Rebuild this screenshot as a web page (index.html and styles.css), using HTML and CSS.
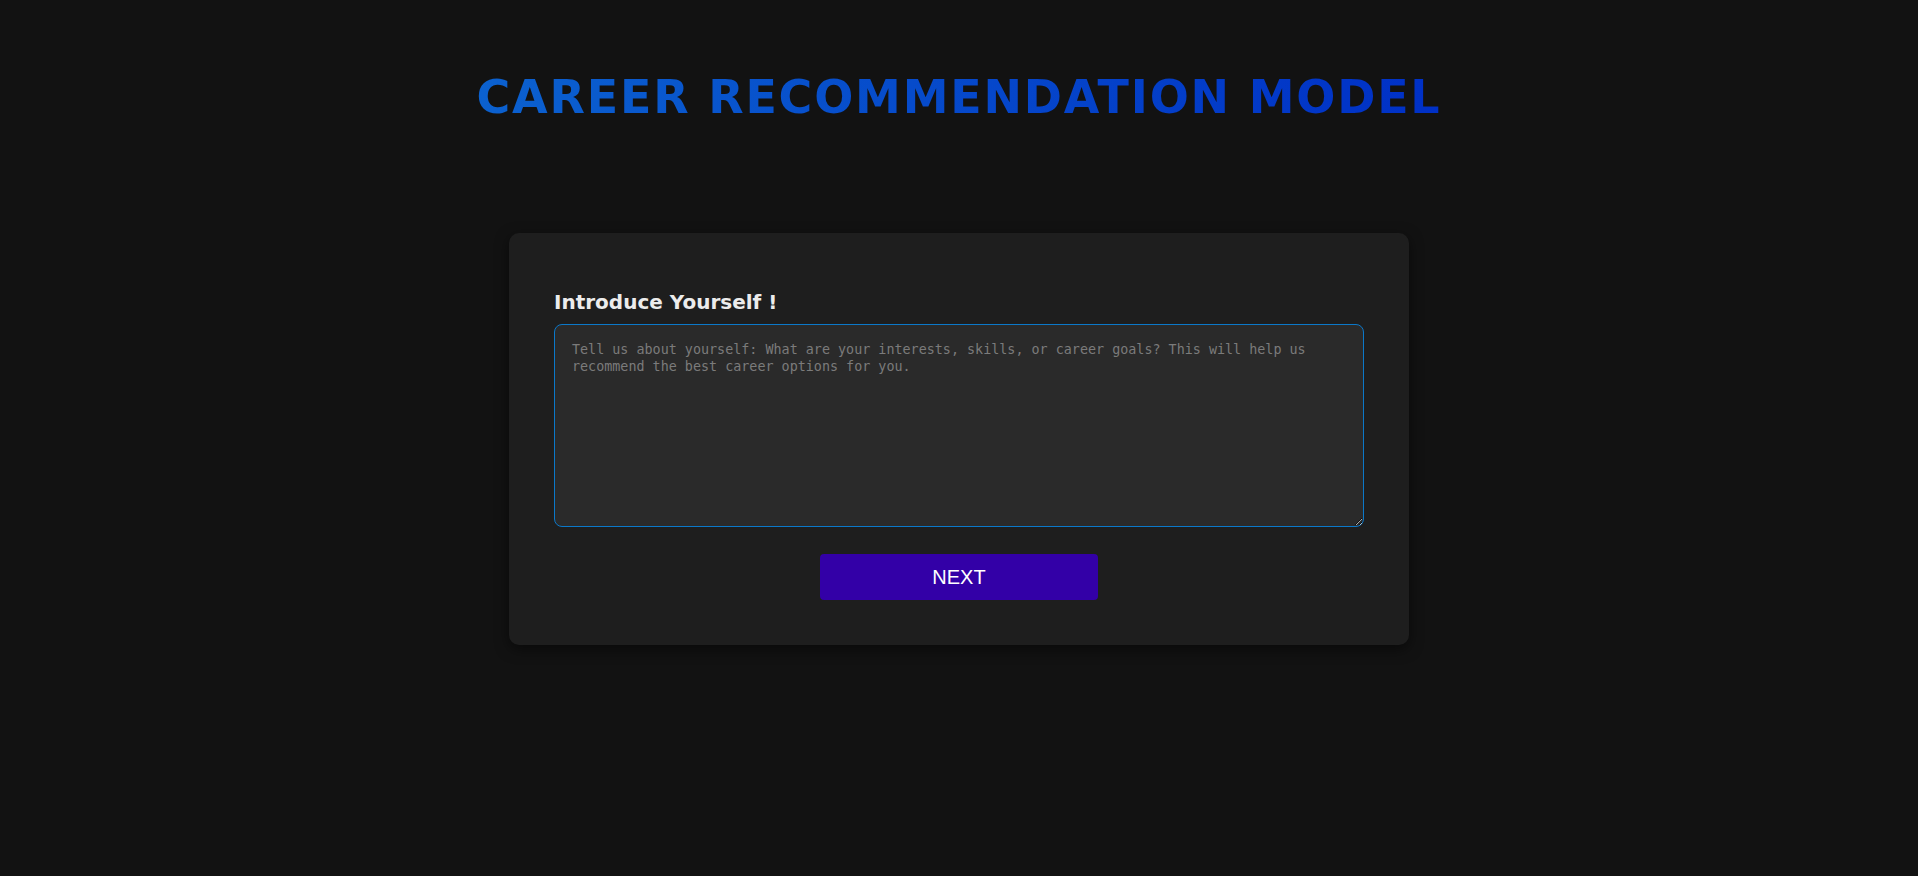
FILE: index.html
```html
<!DOCTYPE html>
<html lang="en">
<head>
<meta charset="utf-8">
<title>Career Recommendation Model</title>
<link rel="stylesheet" href="styles.css">
</head>
<body>
  <header class="header">
    <h1 class="title">CAREER RECOMMENDATION MODEL</h1>
  </header>
  <main class="main">
    <form class="card">
      <label class="label" for="intro">Introduce Yourself !</label>
      <textarea id="intro" class="intro" placeholder="Tell us about yourself: What are your interests, skills, or career goals? This will help us recommend the best career options for you."></textarea>
      <div class="actions">
        <button type="button" class="next">NEXT</button>
      </div>
    </form>
  </main>
</body>
</html>
```

FILE: styles.css
```css
* { box-sizing: border-box; }
html, body { margin: 0; padding: 0; }
body {
  background: #121212;
  min-height: 876px;
  font-family: "DejaVu Sans", Verdana, sans-serif;
}
.header {
  display: flex;
  justify-content: center;
  padding-top: 69px;
}
.title {
  margin: 0;
  font-family: "DejaVu Sans", Verdana, sans-serif;
  font-weight: bold;
  font-size: 46px;
  line-height: 56px;
  letter-spacing: 1.8px;
  background: linear-gradient(90deg, #0b61cf, #0030c6);
  -webkit-background-clip: text;
  background-clip: text;
  color: transparent;
}
.main {
  display: flex;
  justify-content: center;
  padding-top: 108px;
}
.card {
  width: 900px;
  background: #1e1e1e;
  border-radius: 10px;
  padding: 45px;
  box-shadow: 0 4px 14px rgba(0, 0, 0, 0.5);
  display: flex;
  flex-direction: column;
}
.label {
  display: block;
  margin-top: 10px;
  margin-bottom: 8px;
  font-family: "DejaVu Sans", Verdana, sans-serif;
  font-weight: bold;
  font-size: 20px;
  line-height: 28px;
  color: #ececec;
}
.intro {
  display: block;
  width: 100%;
  height: 203px;
  margin: 0;
  padding: 16px 16px 14px 17px;
  background: #2a2a2a;
  border: 1px solid #0b78c9;
  border-radius: 8px;
  color: #e0e0e0;
  font-family: "DejaVu Sans Mono", "Liberation Mono", monospace;
  font-size: 13.4px;
  line-height: 17px;
  outline: none;
  resize: both;
}
.intro::placeholder { color: #7b7b7b; }
.actions {
  display: flex;
  justify-content: center;
  padding-top: 27px;
}
.next {
  width: 278px;
  height: 46px;
  border: none;
  border-radius: 4px;
  background: #3300a7;
  color: #ffffff;
  font-family: "Liberation Sans", Arial, sans-serif;
  font-size: 20px;
  cursor: pointer;
}
```
